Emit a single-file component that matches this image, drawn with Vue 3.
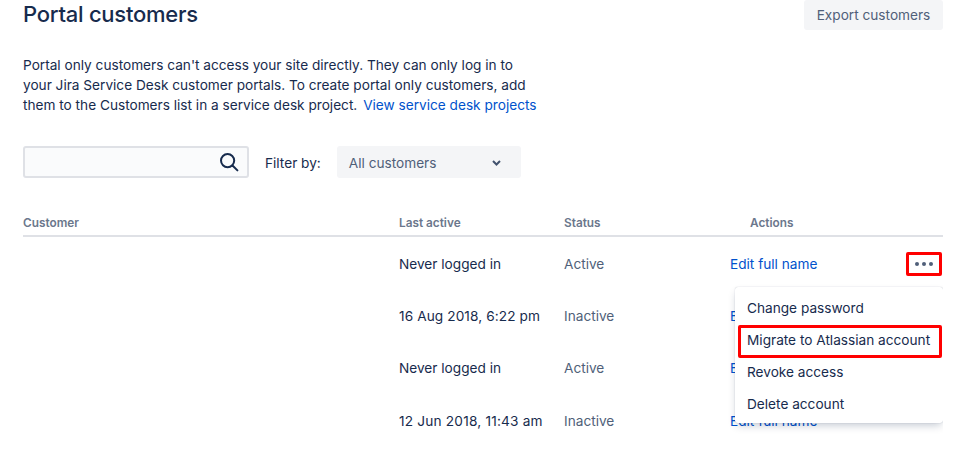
<script setup>
const rows = [
  { last: 'Never logged in', status: 'Active' },
  { last: '16 Aug 2018, 6:22 pm', status: 'Inactive' },
  { last: 'Never logged in', status: 'Active' },
  { last: '12 Jun 2018, 11:43 am', status: 'Inactive', wide: true },
]
const menu = ['Change password', 'Migrate to Atlassian account', 'Revoke access', 'Delete account']
</script>

<template>
  <div class="page">
    <header class="head">
      <h1>Portal customers</h1>
      <button class="export">Export customers</button>
    </header>
    <p class="intro">
      Portal only customers can't access your site directly. They can only log in to<br>
      your Jira Service Desk customer portals. To create portal only customers, add<br>
      them to the Customers list in a service desk project. <a class="view">View service desk projects</a>
    </p>
    <div class="filters">
      <div class="search">
        <svg width="20" height="20" viewBox="0 0 20 20" fill="none" stroke="#172b4d" stroke-width="2">
          <circle cx="8.6" cy="8.6" r="6.6" />
          <path d="M13.5 13.5 L18.4 18.4" stroke-linecap="round" />
        </svg>
      </div>
      <span class="label">Filter by:</span>
      <div class="select">
        <span>All customers</span>
        <svg width="9" height="6" viewBox="0 0 9 6" fill="none" stroke="#42526e" stroke-width="2">
          <path d="M1 1 L4.500 4.500 L8 1" />
        </svg>
      </div>
    </div>
    <div class="table">
      <div class="row th">
        <span>Customer</span><span>Last active</span><span>Status</span><span class="act-head">Actions</span>
      </div>
      <div v-for="(r, i) in rows" :key="i" class="row td">
        <span></span>
        <span :class="{ date: /\d/.test(r.last), wide: r.wide }">{{ r.last }}</span>
        <span class="status">{{ r.status }}</span>
        <a>Edit full name</a>
      </div>
      <div class="more"><i></i><i></i><i></i></div>
      <ul class="menu">
        <li v-for="(m, i) in menu" :key="m" :class="{ mark: i === 1 }">{{ m }}</li>
      </ul>
    </div>
  </div>
</template>

<style>
html, body { margin: 0; background: #fff; overflow: hidden; }
</style>

<style scoped>
.page {
  width: 920px;
  height: 452px;
  padding-left: 23px;
  font-family: Inter, "Liberation Sans", sans-serif;
  font-size: 13.65px;
  color: #172b4d;
  overflow: hidden;
}
.head { display: flex; justify-content: space-between; align-items: flex-start; height: 30px; }
h1 { margin: 0; font-size: 22px; line-height: 28px; font-weight: 500; letter-spacing: -0.25px; }
.export {
  width: 139px; height: 30px; padding: 0; border: 0; border-radius: 3px;
  background: #f4f5f7; color: #505f79; font: inherit;
}
.intro { margin: 25px 0 0; line-height: 20px; }
a { color: #0052cc; }
.view { margin-left: 2px; }
.filters { display: flex; align-items: center; margin-top: 31px; height: 32px; }
.search {
  box-sizing: border-box; width: 226px; height: 32px; border: 2px solid #dfe1e6; border-radius: 3px;
  background: #fafbfc; display: flex; justify-content: flex-end; align-items: center; padding-right: 8px;
}
.label { margin-left: 16px; padding-top: 1px; }
.select {
  box-sizing: border-box; width: 184px; height: 32px; margin-left: 16px; border-radius: 3px; background: #f4f5f7;
  color: #505f79; display: flex; align-items: center; justify-content: space-between; padding: 1px 20px 0 12px;
}
.table { position: relative; margin-top: 36px; }
.row { display: grid; grid-template-columns: 376px 165px 166px 1fr; }
.th {
  font-size: 11.8px; line-height: 17px; font-weight: 600; color: #6b778c; padding-top: 1px; margin-bottom: 1px;
  border-bottom: 2px solid #dfe1e6; box-sizing: border-box; height: 23px;
}
.act-head { padding-left: 20px; }
.td { height: 52px; align-items: center; }
.td:nth-child(5) { margin-top: 1px; }
.date { letter-spacing: 0.1px; }
.wide { letter-spacing: 0.2px; }
.status { color: #505f79; }
.more {
  position: absolute; right: 1px; top: 38px; width: 36px; height: 24px; box-sizing: border-box;
  border: 3px solid #f00; display: flex; justify-content: center; align-items: center; gap: 3px;
  border-radius: 2px;
}
.more i { width: 4px; height: 4px; border-radius: 50%; background: #505f79; }
.menu {
  position: absolute; right: 0; top: 73px; width: 208px; margin: 0; padding: 5px 0 3px; list-style: none;
  background: #fff; border-radius: 3px; box-shadow: 0 4px 8px -2px rgba(9,30,66,.25), 0 0 1px rgba(9,30,66,.31);
}
.menu li { position: relative; height: 32px; line-height: 32px; padding-left: 12px; white-space: nowrap; box-sizing: border-box; }
.menu li.mark::after {
  content: ""; position: absolute; top: 1px; bottom: -2px; left: 3px; right: 1px;
  border: 3px solid #f00; border-radius: 2px;
}
</style>
